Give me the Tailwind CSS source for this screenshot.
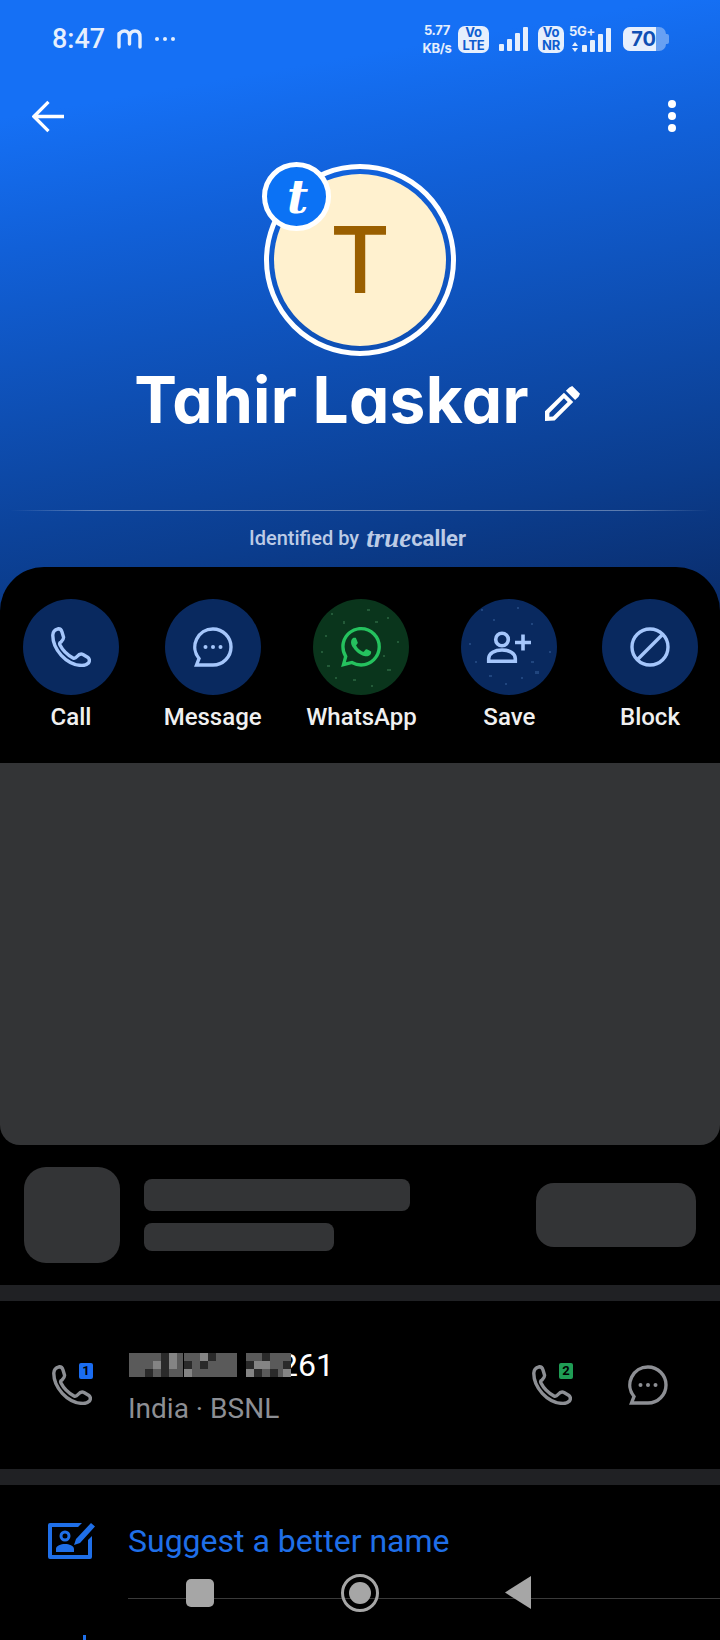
<!DOCTYPE html>
<html lang="en">
<head>
    <meta charset="UTF-8">
    <title>Tahir Laskar - Truecaller</title>
    <script src="https://cdn.jsdelivr.net/npm/@tailwindcss/browser@4"></script>
</head>
<body class="bg-black">
<div class="relative w-[720px] h-[1640px] overflow-hidden bg-black text-white [font-family:Roboto,sans-serif]">

    <!-- Blue header -->
    <header class="h-[611px] bg-[linear-gradient(170deg,#1570f5_16%,#1160d8_34%,#0b3d8e_80%,#0a2c6a_100%)]">
        <!-- Status bar -->
        <div class="h-[78px] flex items-center justify-between pl-[52px] pr-[51px] text-[#e6effd]">
            <div class="flex items-center">
                <span class="text-[27px] font-medium leading-none">8:47</span>
                <svg class="ml-[12px] w-[25px] h-[20px]" viewBox="0 0 25 20" fill="none" stroke="#e6effd" stroke-width="3.4" stroke-linecap="round"><path d="M2 18V4.500M2 8C2 4 4.500 2 7.500 2S12.500 4 12.500 8V15M12.500 8C12.500 4 15 2 18 2S23 4 23 8V18"/></svg>
                <div class="ml-[13px] flex gap-[4px]">
                    <span class="w-[4px] h-[4px] rounded-full bg-[#e6effd]"></span>
                    <span class="w-[4px] h-[4px] rounded-full bg-[#e6effd]"></span>
                    <span class="w-[4px] h-[4px] rounded-full bg-[#e6effd]"></span>
                </div>
            </div>
            <div class="flex items-center [font-family:Inter,sans-serif]">
                <div class="w-[32px] text-[13px] font-bold leading-[18px] text-center whitespace-nowrap tracking-[-0.3px]">5.77<br>KB/s</div>
                <div class="ml-[5px] w-[31px] h-[27px] rounded-[7px] bg-[#e6effd] text-[#0f5dd0] text-[13px] font-bold leading-[13px] text-center tracking-[-0.3px]">Vo<br>LTE</div>
                <div class="ml-[10px] flex items-end gap-[3px] h-[24px]">
                    <span class="w-[5px] h-[7px] rounded-[1px] bg-[#e6effd]"></span>
                    <span class="w-[5px] h-[12px] rounded-[1px] bg-[#e6effd]"></span>
                    <span class="w-[5px] h-[18px] rounded-[1px] bg-[#e6effd]"></span>
                    <span class="w-[5px] h-[24px] rounded-[1px] bg-[#e6effd]"></span>
                </div>
                <div class="ml-[10px] w-[26px] h-[27px] rounded-[7px] bg-[#e6effd] text-[#0f5dd0] text-[13px] font-bold leading-[13px] text-center tracking-[-0.3px]">Vo<br>NR</div>
                <div class="ml-[5px] relative w-[44px] h-[27px]">
                    <span class="absolute left-0 top-[-1px] text-[13px] font-bold leading-[13px] tracking-[-0.3px]">5G+</span>
                    <svg class="absolute left-[3px] top-[16px] w-[6px] h-[10px]" viewBox="0 0 6 10" fill="#e6effd"><path d="M3 0L6 4H0ZM3 10L0 6H6Z"/></svg>
                    <div class="absolute left-[13px] bottom-[1px] flex items-end gap-[3px]">
                        <span class="w-[5px] h-[7px] rounded-[1px] bg-[#e6effd]"></span>
                        <span class="w-[5px] h-[12px] rounded-[1px] bg-[#e6effd]"></span>
                        <span class="w-[5px] h-[18px] rounded-[1px] bg-[#e6effd]"></span>
                        <span class="w-[5px] h-[24px] rounded-[1px] bg-[#e6effd]"></span>
                    </div>
                </div>
                <div class="ml-[10px] flex items-center">
                    <div class="w-[43px] h-[24px] rounded-[7px] bg-[#e6effd]/40 overflow-hidden">
                        <div class="w-[33px] h-full bg-[#e6effd] text-[#0f4fb4] text-[20px] font-bold leading-[24px] text-right">70</div>
                    </div>
                    <span class="w-[3px] h-[10px] rounded-r-[2px] bg-[#e6effd]/40"></span>
                </div>
            </div>
        </div>

        <!-- Toolbar -->
        <div class="h-[76px] flex items-center justify-between pl-[32px] pr-[44px]">
            <svg class="w-[32px] h-[33px]" viewBox="0 0 33 33" fill="none" stroke="white" stroke-width="3.400"><path d="M1 16.500H33M17 1.500L2 16.500L17 31.500"/></svg>
            <div class="flex flex-col gap-[4px]">
                <span class="w-[8px] h-[8px] rounded-full bg-white"></span>
                <span class="w-[8px] h-[8px] rounded-full bg-white"></span>
                <span class="w-[8px] h-[8px] rounded-full bg-white"></span>
            </div>
        </div>

        <!-- Avatar -->
        <div class="mt-[10px] flex justify-center">
            <div class="relative w-[192px] h-[192px] rounded-full border-[5px] border-white p-[5px]">
                <div class="w-full h-full rounded-full bg-[#fff1cf] flex items-center justify-center text-[#9a5f00] text-[92px] font-medium leading-none [font-family:Inter,sans-serif]">T</div>
                <div class="absolute left-[-7px] top-[-7px] w-[69px] h-[69px] rounded-full border-[5px] border-white bg-[#0b72f5] flex items-center justify-center text-white text-[46px] font-bold italic leading-none [font-family:'DejaVu_Serif',serif]"><span class="ml-[2px]">t</span></div>
            </div>
        </div>

        <!-- Name -->
        <div class="mt-[9px] h-[70px] flex items-center justify-center pr-[6px]">
            <h1 class="text-[64px] font-bold leading-[70px] tracking-[0.3px] whitespace-nowrap [font-family:Inter,sans-serif] [font-feature-settings:'cv11']">Tahir Laskar</h1>
            <svg class="ml-[16px] mt-[6px] w-[35px] h-[35px]" viewBox="0 0 36 36" fill="white"><path fill-rule="evenodd" d="M25 1.500L28 0L36 8L34.500 11L31 14.500L21.500 5ZM19.500 7L29 16.500L10 35.500L0 36V26ZM19.500 12.500L4.500 27.800V31.500L8.200 31.300L23.300 16.500Z"/></svg>
        </div>

        <div class="mt-[75px] mx-[10px] h-[1px] bg-[linear-gradient(90deg,transparent,#ffffff55_12%,#ffffff55_88%,transparent)]"></div>

        <!-- Identified by -->
        <div class="h-[54px] flex items-center justify-center pr-[5px] text-[#bccbe6]">
            <span class="text-[20px] font-medium">Identified by</span>
            <span class="ml-[7px] text-[27px] leading-none font-bold italic [font-family:'Liberation_Serif',serif]">true</span>
            <span class="text-[22px] font-bold">caller</span>
        </div>
    </header>

    <!-- Actions -->
    <section class="relative -mt-[44px] h-[196px] rounded-t-[44px] bg-black pl-[23px] pr-[22px] pt-[32px] flex justify-between">
        <div class="flex flex-col items-center">
            <div class="w-[96px] h-[96px] rounded-full bg-[#09295f] flex items-center justify-center">
                <svg class="w-[40px] h-[40px]" viewBox="0 0 40 40" fill="none" stroke="#a5c6fb" stroke-width="3.400" stroke-linejoin="round"><path d="M7 1.800Q10 1.500 11 5L12.500 10Q13 12 10 15Q8 16 9 18Q13 26 22 31Q24 32 26 29.500Q29 26 32 27.500L37 30.500Q39.500 33 37.500 36Q35 38.500 31 38.500C15 38 1.500 22 1.800 8Q2 3 7 1.800Z"/></svg>
            </div>
            <span class="mt-[8px] text-[24px] font-medium leading-[28px] text-[#f0f0f0]">Call</span>
        </div>
        <div class="flex flex-col items-center">
            <div class="w-[96px] h-[96px] rounded-full bg-[#09295f] flex items-center justify-center">
                <svg class="w-[40px] h-[40px]" viewBox="0 0 40 40" fill="none" stroke="#a5c6fb" stroke-width="3.400"><path d="M20 2A18 18 0 1 1 20 38H3.500L6 31.500A18 18 0 0 1 20 2Z"/><g fill="#a5c6fb" stroke="none"><circle cx="12.500" cy="20" r="2"/><circle cx="20" cy="20" r="2"/><circle cx="27.500" cy="20" r="2"/></g></svg>
            </div>
            <span class="mt-[8px] text-[24px] font-medium leading-[28px] text-[#f0f0f0]">Message</span>
        </div>
        <div class="flex flex-col items-center">
            <div class="w-[96px] h-[96px] rounded-full bg-[#0a351c] flex items-center justify-center">
                <svg class="w-[96px] h-[96px]" viewBox="0 0 96 96">
                    <g fill="#5fae7c" fill-opacity="0.3">
                        <rect x="18" y="14" width="2" height="2"/><rect x="30" y="22" width="2" height="3"/><rect x="54" y="10" width="3" height="2"/><rect x="62" y="22" width="3" height="2"/><rect x="74" y="18" width="2" height="2"/><rect x="8" y="52" width="2" height="2"/><rect x="14" y="66" width="3" height="2"/><rect x="22" y="78" width="2" height="2"/><rect x="40" y="80" width="3" height="2"/><rect x="58" y="86" width="2" height="2"/><rect x="74" y="70" width="4" height="2"/><rect x="84" y="42" width="2" height="2"/><rect x="70" y="56" width="2" height="2"/><rect x="12" y="36" width="2" height="2"/>
                    </g>
                    <path transform="translate(28 28) scale(1.667)" fill="#25c25e" d="M17.472 14.382c-.297-.149-1.758-.867-2.03-.967-.273-.099-.471-.148-.67.15-.197.297-.767.966-.94 1.164-.173.199-.347.223-.644.075-.297-.15-1.255-.463-2.39-1.475-.883-.788-1.48-1.761-1.653-2.059-.173-.297-.018-.458.13-.606.134-.133.298-.347.446-.52.149-.174.198-.298.298-.497.099-.198.05-.371-.025-.52-.075-.149-.669-1.612-.916-2.207-.242-.579-.487-.5-.669-.51-.173-.008-.371-.01-.57-.01-.198 0-.52.074-.792.372-.272.297-1.04 1.016-1.04 2.479 0 1.462 1.065 2.875 1.213 3.074.149.198 2.096 3.2 5.077 4.487.709.306 1.262.489 1.694.625.712.227 1.36.195 1.871.118.571-.085 1.758-.719 2.006-1.413.248-.694.248-1.289.173-1.413-.074-.124-.272-.198-.57-.347m-5.421 7.403h-.004a9.87 9.87 0 01-5.031-1.378l-.361-.214-3.741.982.998-3.648-.235-.374a9.86 9.86 0 01-1.51-5.26c.001-5.45 4.436-9.884 9.888-9.884 2.64 0 5.122 1.03 6.988 2.898a9.825 9.825 0 012.893 6.994c-.003 5.45-4.437 9.884-9.885 9.884m8.413-18.297A11.815 11.815 0 0012.05 0C5.495 0 .16 5.335.157 11.892c0 2.096.547 4.142 1.588 5.945L.057 24l6.305-1.654a11.882 11.882 0 005.683 1.448h.005c6.554 0 11.89-5.335 11.893-11.893a11.821 11.821 0 00-3.48-8.413z"/>
                </svg>
            </div>
            <span class="mt-[8px] text-[24px] font-medium leading-[28px] text-[#f0f0f0]">WhatsApp</span>
        </div>
        <div class="flex flex-col items-center">
            <div class="w-[96px] h-[96px] rounded-full bg-[#09295f] flex items-center justify-center">
                <svg class="w-[96px] h-[96px]" viewBox="0 0 96 96">
                    <g fill="#5f8fd0" fill-opacity="0.28">
                        <rect x="20" y="10" width="2" height="2"/><rect x="56" y="8" width="2" height="2"/><rect x="32" y="20" width="2" height="2"/><rect x="70" y="24" width="2" height="2"/><rect x="14" y="62" width="2" height="2"/><rect x="28" y="76" width="3" height="2"/><rect x="44" y="84" width="2" height="2"/><rect x="70" y="62" width="3" height="2"/><rect x="74" y="72" width="4" height="3"/><rect x="88" y="52" width="2" height="2"/><rect x="60" y="78" width="2" height="2"/><rect x="8" y="44" width="2" height="2"/>
                    </g>
                    <g fill="none" stroke="#a5c6fb" stroke-width="3.600">
                        <circle cx="41" cy="40.500" r="6.300"/>
                        <path d="M27.700 62.300V59.500C27.700 54 34 51 41 51S54.300 54 54.300 59.500V62.300Z"/>
                        <path d="M54 43.500H70M62 35.500V51.500"/>
                    </g>
                </svg>
            </div>
            <span class="mt-[8px] text-[24px] font-medium leading-[28px] text-[#f0f0f0]">Save</span>
        </div>
        <div class="flex flex-col items-center">
            <div class="w-[96px] h-[96px] rounded-full bg-[#09295f] flex items-center justify-center">
                <svg class="w-[40px] h-[40px]" viewBox="0 0 40 40" fill="none" stroke="#a5c6fb" stroke-width="3.400"><circle cx="20" cy="20" r="18"/><path d="M7.500 32.500L32.500 7.500"/></svg>
            </div>
            <span class="mt-[8px] text-[24px] font-medium leading-[28px] text-[#f0f0f0]">Block</span>
        </div>
    </section>

    <!-- Ad placeholder -->
    <div class="h-[382px] bg-[#333436] rounded-b-[20px]"></div>
    <div class="h-[140px] flex items-center px-[24px]">
        <div class="w-[96px] h-[96px] rounded-[22px] bg-[#333436]"></div>
        <div class="ml-[24px] flex flex-col gap-[12px]">
            <div class="w-[266px] h-[32px] rounded-[8px] bg-[#333436]"></div>
            <div class="w-[190px] h-[28px] rounded-[8px] bg-[#333436]"></div>
        </div>
        <div class="ml-auto w-[160px] h-[64px] rounded-[18px] bg-[#333436]"></div>
    </div>
    <div class="h-[16px] bg-[#202124]"></div>

    <!-- Number -->
    <div class="h-[168px] flex items-center pl-[52px] pr-[52px]">
        <div class="relative w-[41px] h-[40px]">
            <svg class="w-[40px] h-[40px]" viewBox="0 0 40 40" fill="none" stroke="#8d8f94" stroke-width="3.400" stroke-linejoin="round"><path d="M7 1.800Q10 1.500 11 5L12.500 10Q13 12 10 15Q8 16 9 18Q13 26 22 31Q24 32 26 29.500Q29 26 32 27.500L37 30.500Q39.500 33 37.500 36Q35 38.500 31 38.500C15 38 1.500 22 1.800 8Q2 3 7 1.800Z"/></svg>
            <span class="absolute left-[27px] top-[-2px] w-[14px] h-[16px] rounded-[2px] bg-[#1a6cf0] text-black text-[13px] font-bold leading-[16px] text-center">1</span>
        </div>
        <div class="ml-[36px] pt-[3px]">
            <div class="relative h-[36px] text-[32px] leading-[36px] whitespace-nowrap w-[205px]">
                <span class="block w-[205px] text-right">261</span>
                <svg class="absolute left-0 top-[6px] w-[162px] h-[24px]" viewBox="0 0 162 24" shape-rendering="crispEdges">
                    <rect width="162" height="24" fill="#5a5a5a" />
                    <rect x="54" width="1" height="24" fill="#000"/><rect x="108" width="9" height="24" fill="#000"/>
                    <g fill="#2a2a2a"><rect x="32" width="8" height="8"/><rect x="32" y="8" width="8" height="8"/><rect x="16" y="16" width="8" height="8"/><rect x="32" y="16" width="8" height="8"/><rect x="55" y="8" width="8" height="8"/><rect x="71" y="8" width="8" height="8"/><rect x="79" width="8" height="8"/><rect x="117" y="8" width="8" height="8"/><rect x="133" width="8" height="8"/><rect x="154" y="8" width="8" height="8"/><rect x="125" y="16" width="8" height="8"/><rect x="141" y="16" width="8" height="8"/></g>
                    <g fill="#848484"><rect x="24" y="8" width="8" height="8"/><rect x="40" width="8" height="8"/><rect x="40" y="8" width="8" height="8"/><rect x="71" width="8" height="8"/><rect x="55" y="16" width="8" height="8"/><rect x="125" y="8" width="16" height="8"/><rect x="117" y="16" width="8" height="8"/><rect x="154" y="16" width="8" height="8"/></g>
                </svg>
            </div>
            <div class="mt-[9px] -ml-[1px] text-[28px] leading-[34px] text-[#8d8f94]">India · BSNL</div>
        </div>
        <div class="ml-auto relative w-[41px] h-[40px]">
            <svg class="w-[40px] h-[40px]" viewBox="0 0 40 40" fill="none" stroke="#8d8f94" stroke-width="3.400" stroke-linejoin="round"><path d="M7 1.800Q10 1.500 11 5L12.500 10Q13 12 10 15Q8 16 9 18Q13 26 22 31Q24 32 26 29.500Q29 26 32 27.500L37 30.500Q39.500 33 37.500 36Q35 38.500 31 38.500C15 38 1.500 22 1.800 8Q2 3 7 1.800Z"/></svg>
            <span class="absolute left-[27px] top-[-2px] w-[14px] h-[16px] rounded-[2px] bg-[#1f9d55] text-black text-[13px] font-bold leading-[16px] text-center">2</span>
        </div>
        <svg class="ml-[55px] w-[40px] h-[40px]" viewBox="0 0 40 40" fill="none" stroke="#8d8f94" stroke-width="3.400"><path d="M20 2A18 18 0 1 1 20 38H3.500L6 31.500A18 18 0 0 1 20 2Z"/><g fill="#8d8f94" stroke="none"><circle cx="12.500" cy="20" r="2"/><circle cx="20" cy="20" r="2"/><circle cx="27.500" cy="20" r="2"/></g></svg>
    </div>
    <div class="h-[16px] bg-[#202124]"></div>

    <!-- Suggest -->
    <div class="h-[112px] flex items-center pl-[48px]">
        <svg class="w-[47px] h-[36px]" viewBox="0 0 47 36" fill="#1f6fe8">
            <path fill-rule="evenodd" d="M2 0H34L30 4H4V32H40V17L44 13V34Q44 36 42 36H2Q0 36 0 34V2Q0 0 2 0Z"/>
            <path d="M43 0L47 3.500L32 20L26 22L28 16ZM8 29V26C8 22.500 13 21 17 21S26 22.500 26 26V29Z"/>
            <circle cx="17" cy="13" r="4" fill="none" stroke="#1f6fe8" stroke-width="3"/>
        </svg>
        <span class="ml-[33px] text-[32px] leading-none text-[#1f6fe8]">Suggest a better name</span>
    </div>
    <div class="mt-[38px] ml-[83px] w-[3px] h-[5px] bg-[#1f6fe8]"></div>

    <!-- Android navigation overlay -->
    <div class="absolute left-[128px] right-0 top-[1598px] h-[1px] bg-[#3a3a3a]"></div>
    <div class="absolute left-[186px] top-[1579px] w-[28px] h-[28px] rounded-[5px] bg-[#a6a6a6]"></div>
    <div class="absolute left-[341px] top-[1574px] w-[38px] h-[38px] rounded-full border-[3px] border-[#a6a6a6] flex items-center justify-center">
        <div class="w-[22px] h-[22px] rounded-full bg-[#a6a6a6]"></div>
    </div>
    <svg class="absolute left-[505px] top-[1576px] w-[26px] h-[33px]" viewBox="0 0 26 33" fill="#a6a6a6"><path d="M26 0V33L0 16.500Z"/></svg>
</div>
</body>
</html>
